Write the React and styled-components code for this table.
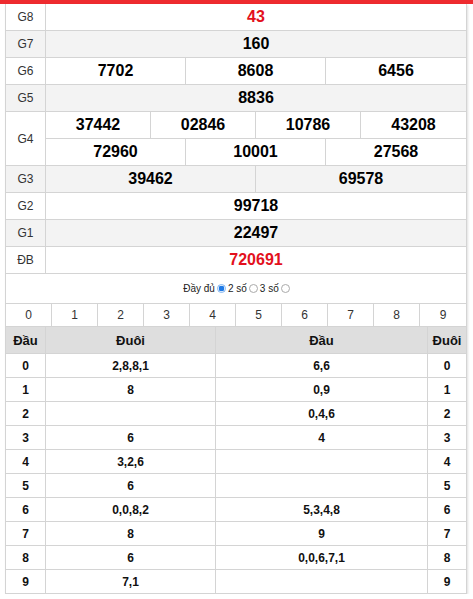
import React from "react";
import styled, { createGlobalStyle } from "styled-components";

const Global = createGlobalStyle`
  html, body { margin: 0; padding: 0; background: #fff; }
  body { font-family: "Liberation Sans", Arial, sans-serif; color: #000; }
`;

const LINE = "#d4d4d4";

const RedBar = styled.div`
  height: 4px;
  background: #ee2b2f;
`;

const Wrapper = styled.div`
  margin-left: 5px;
  width: 462px;
  box-sizing: border-box;
  border-left: 1px solid ${LINE};
  border-right: 1px solid ${LINE};
  border-bottom: 1px solid ${LINE};
  box-shadow: 1px 1px 2px rgba(0, 0, 0, 0.12);
`;

const PrizeRow = styled.div`
  display: grid;
  grid-template-columns: 40px 1fr;
  border-bottom: 1px solid ${LINE};
  background: ${(p) => (p.$alt ? "#f3f3f3" : "#fff")};
`;

const Label = styled.div`
  border-right: 1px solid ${LINE};
  display: flex;
  align-items: center;
  justify-content: center;
  font-size: 12px;
  color: #333;
`;

const Lines = styled.div`
  display: flex;
  flex-direction: column;
`;

const Line = styled.div`
  display: grid;
  grid-template-columns: repeat(${(p) => p.$n}, 1fr);
  & + & {
    border-top: 1px solid ${LINE};
  }
`;

const Num = styled.div`
  height: 26px;
  display: flex;
  align-items: center;
  justify-content: center;
  font-size: 16px;
  font-weight: bold;
  color: ${(p) => (p.$red ? "#e3101c" : "#000")};
  &:not(:last-child) {
    border-right: 1px solid ${LINE};
  }
`;

const Options = styled.div`
  height: 29px;
  display: flex;
  align-items: center;
  justify-content: center;
  font-size: 10px;
  color: #222;
  padding-left: 3px;
`;

const Radio = styled.span`
  display: inline-block;
  box-sizing: border-box;
  width: 9px;
  height: 9px;
  border-radius: 50%;
  margin: 0 2px 0 2px;
  border: 1px solid ${(p) => (p.$on ? "#7fb3ef" : "#aaa")};
  background: ${(p) =>
    p.$on ? "radial-gradient(circle, #1f7ae6 0 55%, #fff 62%)" : "#fff"};
`;

const Digits = styled.div`
  display: grid;
  grid-template-columns: repeat(10, 1fr);
  border-top: 1px solid ${LINE};
  border-bottom: 1px solid ${LINE};
`;

const Digit = styled.div`
  height: 22px;
  display: flex;
  align-items: center;
  justify-content: center;
  font-size: 12px;
  color: #333;
  &:not(:last-child) {
    border-right: 1px solid ${LINE};
  }
`;

const LotoRow = styled.div`
  display: grid;
  grid-template-columns: 40px 170px 212px 1fr;
  background: ${(p) => (p.$head ? "#dedede" : "#fff")};
  &:not(:last-child) {
    border-bottom: 1px solid ${LINE};
  }
`;

const LotoCell = styled.div`
  height: ${(p) => (p.$head ? "26px" : "23px")};
  display: flex;
  align-items: center;
  justify-content: center;
  font-weight: bold;
  font-size: ${(p) => (p.$head ? "13px" : "12px")};
  color: #111;
  &:not(:last-child) {
    border-right: 1px solid ${LINE};
  }
`;

const prizes = [
  { label: "G8", lines: [["43"]], red: true },
  { label: "G7", lines: [["160"]] },
  { label: "G6", lines: [["7702", "8608", "6456"]] },
  { label: "G5", lines: [["8836"]] },
  { label: "G4", lines: [["37442", "02846", "10786", "43208"], ["72960", "10001", "27568"]] },
  { label: "G3", lines: [["39462", "69578"]] },
  { label: "G2", lines: [["99718"]] },
  { label: "G1", lines: [["22497"]] },
  { label: "ĐB", lines: [["720691"]], red: true },
];

const loto = [
  ["2,8,8,1", "6,6"],
  ["8", "0,9"],
  ["", "0,4,6"],
  ["6", "4"],
  ["3,2,6", ""],
  ["6", ""],
  ["0,0,8,2", "5,3,4,8"],
  ["8", "9"],
  ["6", "0,0,6,7,1"],
  ["7,1", ""],
];

export default function App() {
  return (
    <>
      <Global />
      <RedBar />
      <Wrapper>
        {prizes.map((p, i) => (
          <PrizeRow key={p.label} $alt={i % 2 === 1}>
            <Label>{p.label}</Label>
            <Lines>
              {p.lines.map((line, j) => (
                <Line key={j} $n={line.length}>
                  {line.map((n, k) => (
                    <Num key={k} $red={p.red}>
                      {n}
                    </Num>
                  ))}
                </Line>
              ))}
            </Lines>
          </PrizeRow>
        ))}
        <Options>
          Đầy đủ
          <Radio $on />
          2 số
          <Radio />
          3 số
          <Radio />
        </Options>
        <Digits>
          {Array.from({ length: 10 }, (_, i) => (
            <Digit key={i}>{i}</Digit>
          ))}
        </Digits>
        <LotoRow $head>
          <LotoCell $head>Đầu</LotoCell>
          <LotoCell $head>Đuôi</LotoCell>
          <LotoCell $head>Đầu</LotoCell>
          <LotoCell $head>Đuôi</LotoCell>
        </LotoRow>
        {loto.map((r, i) => (
          <LotoRow key={i}>
            <LotoCell>{i}</LotoCell>
            <LotoCell>{r[0]}</LotoCell>
            <LotoCell>{r[1]}</LotoCell>
            <LotoCell>{i}</LotoCell>
          </LotoRow>
        ))}
      </Wrapper>
    </>
  );
}
